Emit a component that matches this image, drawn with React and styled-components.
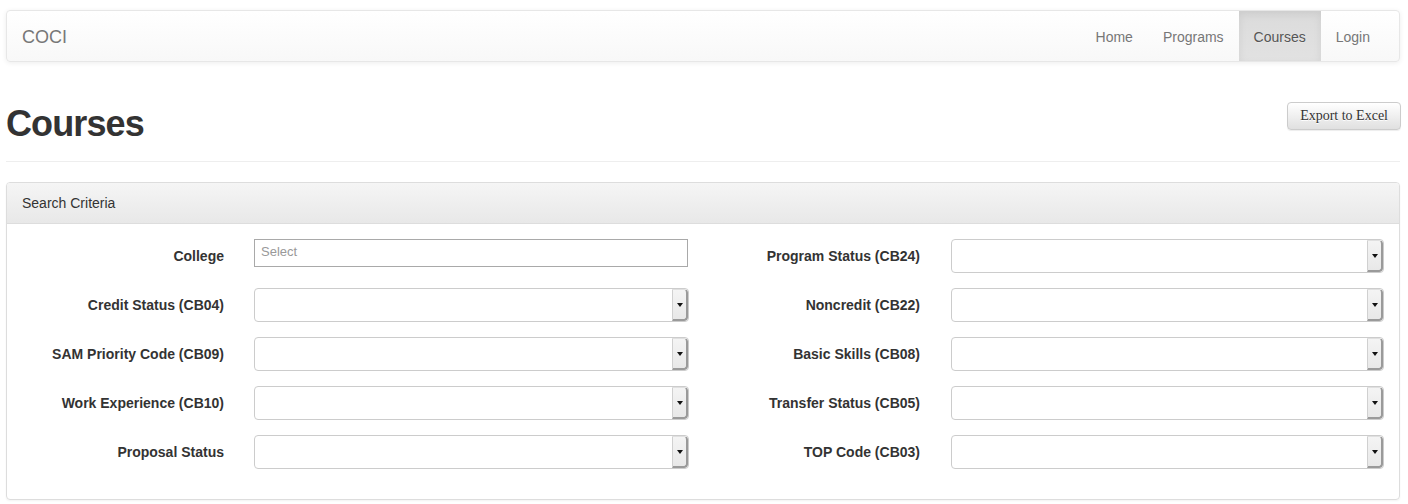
import React from "react";
import styled, { createGlobalStyle } from "styled-components";

const Global = createGlobalStyle`
  html, body { margin: 0; padding: 0; background: #fff; }
  body {
    font-family: "Liberation Sans", Arial, sans-serif;
    font-size: 14px;
    line-height: 20px;
    color: #333;
  }
  * { box-sizing: border-box; }
`;

const Page = styled.div`
  padding: 10px 8px 5px 6px;
`;

const Navbar = styled.nav`
  display: flex;
  align-items: stretch;
  justify-content: space-between;
  height: 52px;
  border: 1px solid #e7e7e7;
  border-radius: 4px;
  background: linear-gradient(to bottom, #ffffff 0%, #f8f8f8 100%);
  box-shadow: inset 0 1px 0 rgba(255, 255, 255, 0.15), 0 1px 5px rgba(0, 0, 0, 0.075);
  padding: 0 14px 0 15px;
`;

const Brand = styled.a`
  display: flex;
  align-items: center;
  padding-top: 1px;
  font-size: 18px;
  color: #777;
  text-decoration: none;
  text-shadow: 0 1px 0 rgba(255, 255, 255, 0.25);
`;

const NavList = styled.ul`
  display: flex;
  list-style: none;
  margin: 0;
  padding: 0;
`;

const NavItem = styled.li`
  display: flex;
  align-items: center;
  padding: 1px 15px 0;
  color: ${(p) => (p.$active ? "#555" : "#777")};
  background: ${(p) => (p.$active ? "linear-gradient(to bottom, #dbdbdb 0%, #e2e2e2 100%)" : "transparent")};
  box-shadow: ${(p) => (p.$active ? "inset 0 3px 9px rgba(0,0,0,0.075)" : "none")};
  text-shadow: 0 1px 0 rgba(255, 255, 255, 0.25);
`;

const PageHeader = styled.div`
  display: flex;
  justify-content: space-between;
  align-items: flex-start;
  margin-top: 40px;
  padding-bottom: 17px;
  border-bottom: 1px solid #eee;
`;

const Title = styled.h1`
  margin: 2px 0 0;
  font-size: 36px;
  line-height: 40px;
  font-weight: bold;
  letter-spacing: -0.9px;
  color: #333;
`;

const ExportButton = styled.button`
  height: 28px;
  margin-right: -1px;
  padding: 0 12px;
  font-family: "Liberation Serif", "Times New Roman", serif;
  font-size: 14px;
  color: #333;
  border: 1px solid #ccc;
  border-radius: 4px;
  background: linear-gradient(to bottom, #ffffff 0%, #e0e0e0 100%);
  text-shadow: 0 1px 0 #fff;
  box-shadow: inset 0 1px 0 rgba(255, 255, 255, 0.15), 0 1px 1px rgba(0, 0, 0, 0.075);
`;

const Panel = styled.section`
  margin-top: 20px;
  border: 1px solid #ddd;
  border-radius: 4px;
  box-shadow: 0 1px 2px rgba(0, 0, 0, 0.05);
  overflow: hidden;
`;

const PanelHeading = styled.div`
  padding: 10px 15px;
  background: linear-gradient(to bottom, #f5f5f5 0%, #e8e8e8 100%);
  border-bottom: 1px solid #ddd;
  color: #333;
`;

const PanelBody = styled.div`
  padding: 15px 0 30px;
  display: grid;
  grid-template-columns: 1fr 1fr;
  row-gap: 15px;
`;

const FormGroup = styled.div`
  display: flex;
  align-items: flex-start;
`;

const Label = styled.label`
  width: 33.3333%;
  padding: 7px 15px 0;
  text-align: right;
  font-weight: bold;
  color: #333;
`;

const Control = styled.div`
  width: 66.6667%;
  padding: 0 15px 0 15px;
  height: 34px;
`;

const TextInput = styled.div`
  height: 28px;
  border: 1px solid #a9a9a9;
  background: #fff;
  padding: 0 6px;
  font-size: 13px;
  line-height: 24px;
  color: #999;
`;

const SelectBox = styled.div`
  display: flex;
  height: 34px;
  border: 1px solid #ccc;
  border-radius: 4px;
  background: #fff;
  overflow: hidden;
  margin-left: ${(p) => (p.$shift ? "1px" : "0")};
  margin-right: ${(p) => (p.$shift ? "0" : "-1px")};
`;

const SelectValue = styled.div`
  flex: 1;
`;

const ArrowBox = styled.div`
  width: 16px;
  display: flex;
  align-items: center;
  justify-content: center;
  background: linear-gradient(to bottom, #f4f4f4 0%, #e8e8e8 100%);
  border-left: 1px solid #d0d0d0;
  border-right: 2px solid #9a9a9a;
  border-bottom: 2px solid #9a9a9a;
  border-top: 1px solid #e0e0e0;
  border-radius: 0 4px 4px 0;
`;

const Caret = styled.span`
  width: 0;
  height: 0;
  border-left: 3px solid transparent;
  border-right: 3px solid transparent;
  border-top: 4px solid #111;
  margin-left: 1px;
`;

const rows = [
  ["College", "input", "Program Status (CB24)"],
  ["Credit Status (CB04)", "select", "Noncredit (CB22)"],
  ["SAM Priority Code (CB09)", "select", "Basic Skills (CB08)"],
  ["Work Experience (CB10)", "select", "Transfer Status (CB05)"],
  ["Proposal Status", "select", "TOP Code (CB03)"],
];

function Select({ shift }) {
  return (
    <SelectBox $shift={shift}>
      <SelectValue />
      <ArrowBox>
        <Caret />
      </ArrowBox>
    </SelectBox>
  );
}

export default function App() {
  return (
    <>
      <Global />
      <Page>
        <Navbar>
          <Brand>COCI</Brand>
          <NavList>
            <NavItem>Home</NavItem>
            <NavItem>Programs</NavItem>
            <NavItem $active>Courses</NavItem>
            <NavItem>Login</NavItem>
          </NavList>
        </Navbar>
        <PageHeader>
          <Title>Courses</Title>
          <ExportButton>Export to Excel</ExportButton>
        </PageHeader>
        <Panel>
          <PanelHeading>Search Criteria</PanelHeading>
          <PanelBody>
            {rows.map(([left, kind, right]) => (
              <React.Fragment key={left}>
                <FormGroup>
                  <Label>{left}</Label>
                  <Control>
                    {kind === "input" ? <TextInput>Select</TextInput> : <Select />}
                  </Control>
                </FormGroup>
                <FormGroup>
                  <Label>{right}</Label>
                  <Control>
                    <Select shift />
                  </Control>
                </FormGroup>
              </React.Fragment>
            ))}
          </PanelBody>
        </Panel>
      </Page>
    </>
  );
}
